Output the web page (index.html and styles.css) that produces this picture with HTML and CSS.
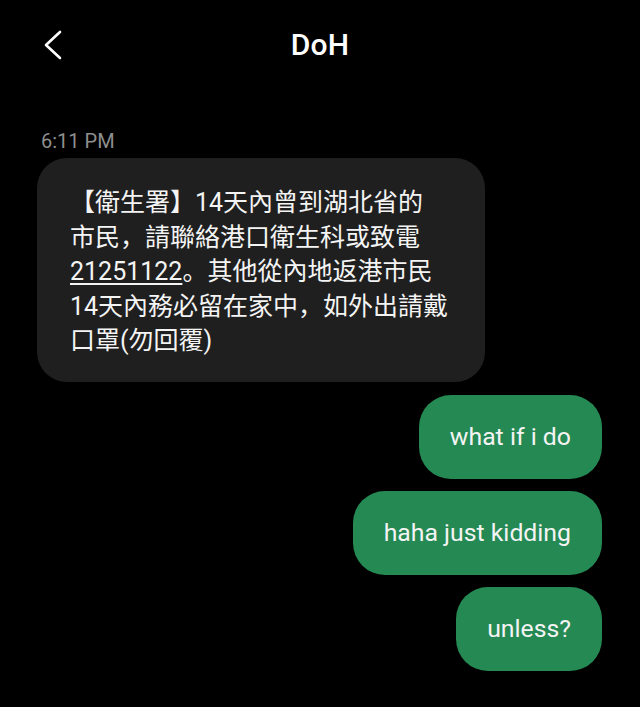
FILE: index.html
```html
<!DOCTYPE html>
<html lang="zh-Hant">
<head>
<meta charset="utf-8">
<title>DoH</title>
<link rel="stylesheet" href="styles.css">
</head>
<body>
<div class="screen">
  <header class="topbar">
    <div class="back">
      <svg width="20" height="30" viewBox="0 0 20 30" aria-hidden="true">
        <polyline points="16,2 2,15 16,28" fill="none" stroke="#ffffff" stroke-width="2.6" stroke-linecap="round" stroke-linejoin="round"/>
      </svg>
    </div>
    <h1 class="title">DoH</h1>
    <div class="spacer"></div>
  </header>
  <main class="thread">
    <div class="time">6:11 PM</div>
    <div class="bubble in" lang="zh-Hans">【衛生署】14天內曾到湖北省的<br>市民，請聯絡港口衛生科或致電<br><span class="num">21251122</span>。其他從內地返港市民<br>14天內務必留在家中，如外出請戴<br>口罩(勿回覆)</div>
    <div class="out-list" lang="en">
      <div class="bubble out">what if i do</div>
      <div class="bubble out">haha just kidding</div>
      <div class="bubble out">unless?</div>
    </div>
  </main>
</div>
</body>
</html>
```
FILE: styles.css
```css
* { box-sizing: border-box; }
html, body {
  margin: 0;
  padding: 0;
  background: #000;
}
body {
  font-family: Roboto, "Noto Sans CJK SC", "Noto Sans", sans-serif;
  color: #f2f2f2;
  width: 640px;
  height: 707px;
  overflow: hidden;
}
.topbar {
  height: 90px;
  display: grid;
  grid-template-columns: 1fr auto 1fr;
  align-items: center;
  padding: 0 44px;
}
.back {
  display: flex;
  align-items: center;
  height: 30px;
}
.back svg { display: block; }
.title {
  margin: 0;
  font-size: 30px;
  font-weight: 500;
  color: #fff;
  line-height: 36px;
  letter-spacing: 0.2px;
}
.thread {
  padding: 0 38px 0 37px;
  display: flex;
  flex-direction: column;
}
.time {
  margin-top: 40px;
  margin-left: 4px;
  font-size: 20px;
  line-height: 22px;
  color: #8e8e8e;
}
.bubble {
  border-radius: 30px;
}
.bubble.in {
  margin-top: 6px;
  width: 448px;
  background: #1f1f1f;
  padding: 28px 20px 23px 33px;
  font-size: 25px;
  line-height: 34.5px;
  white-space: nowrap;
  color: #f4f4f4;
}
.num {
  text-decoration: underline;
  text-decoration-thickness: 1.5px;
  text-underline-offset: 3px;
}
.out-list {
  margin-top: 13px;
  display: flex;
  flex-direction: column;
  align-items: flex-end;
  gap: 12px;
}
.bubble.out {
  background: #258953;
  font-size: 24.8px;
  line-height: 30px;
  padding: 27px 31px;
  color: #f4f4f4;
  border-radius: 32px;
}
```
